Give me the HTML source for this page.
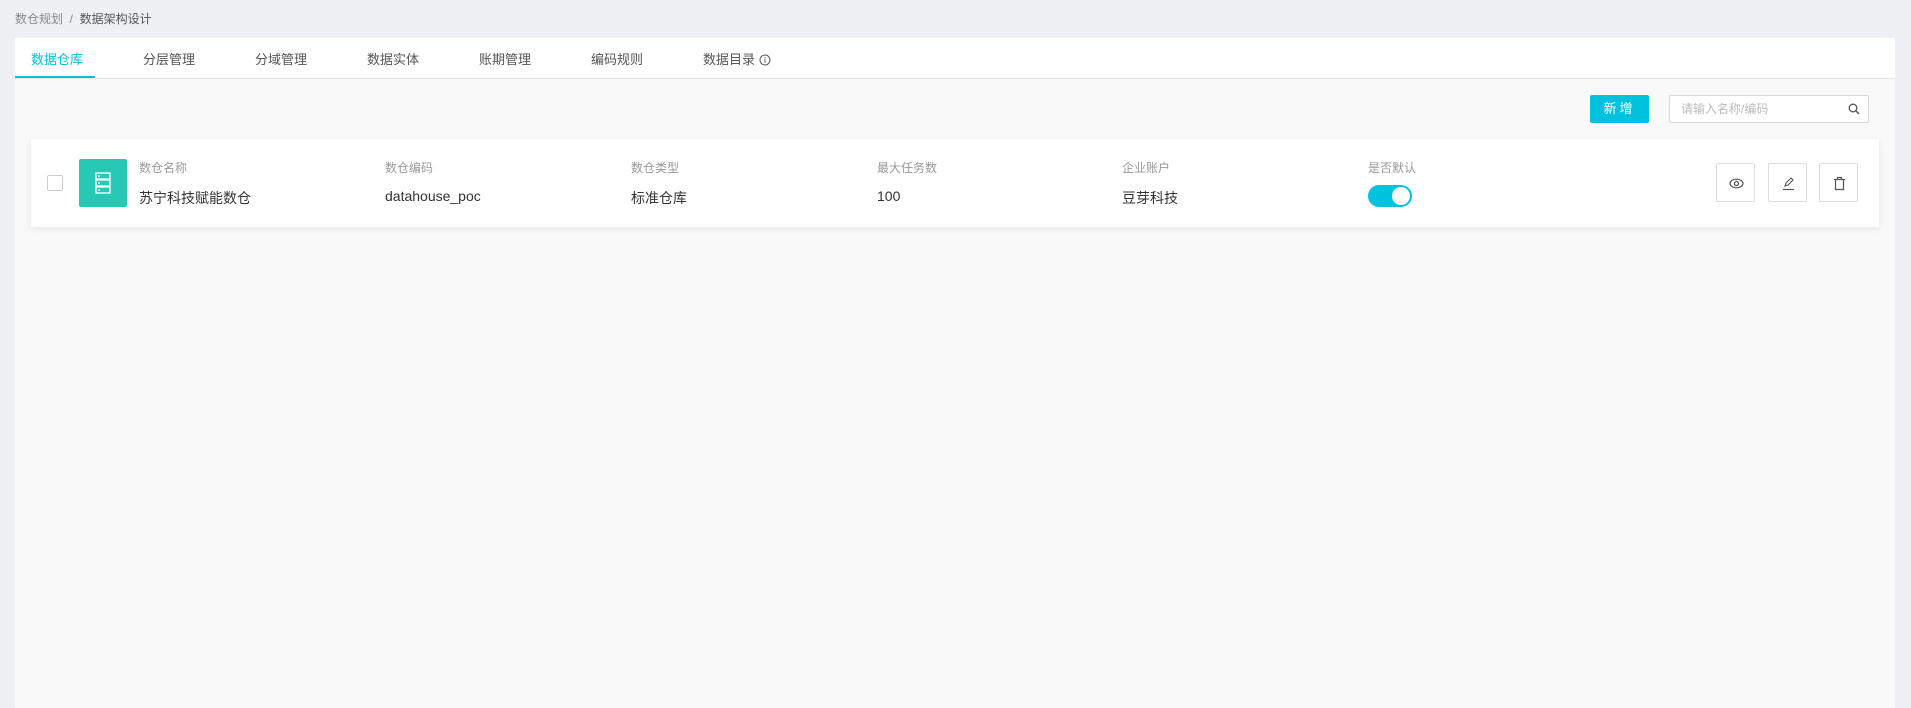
<!DOCTYPE html>
<html><head><meta charset="utf-8"><style>
*{box-sizing:border-box;margin:0;padding:0}
body{width:1911px;height:708px;background:#eff0f3;font-family:"Liberation Sans","Noto Sans CJK SC",sans-serif;position:relative;overflow:hidden;color:#333}
.a{position:absolute}
.bc{left:15px;top:10px;font-size:12px;color:#888}
.bc b{font-weight:normal;color:#555}
.panel{left:15px;top:38px;width:1880px;height:670px;background:#f9f9f9}
.tabs{left:0;top:0;width:1880px;height:41px;background:#fff;border-bottom:1px solid #e4e4e4}
.tab{top:11px;font-size:13px;color:#555}
.ul{left:0;top:38px;width:80px;height:2px;background:#00c1de}
.btn{left:1575px;top:57px;width:59px;height:28px;background:#00c1de;border-radius:2px;color:#fff;font-size:13px;text-align:center;line-height:28px;letter-spacing:3px}
.srch{left:1654px;top:57px;width:200px;height:28px;background:#fff;border:1px solid #d9d9d9;border-radius:2px;font-size:12px;color:#bbb;line-height:26px;padding-left:11px}
.card{left:16px;top:101px;width:1848px;height:88px;background:#fff;box-shadow:0 2px 6px rgba(0,0,0,.08)}
.lbl{top:20px;font-size:12px;color:#999}
.val{top:49px;font-size:14px;color:#333}
.ib{top:24px;width:39px;height:39px;border:1px solid #ddd;border-radius:2px;background:#fff}
.ib svg{position:absolute;left:12px;top:12px}
</style></head><body>
<div class="a bc">数仓规划 &nbsp;/&nbsp; <b>数据架构设计</b></div>
<div class="a panel">
 <div class="a tabs">
  <div class="a tab" style="left:16px;color:#00c1de">数据仓库</div>
  <div class="a tab" style="left:128px">分层管理</div>
  <div class="a tab" style="left:240px">分域管理</div>
  <div class="a tab" style="left:352px">数据实体</div>
  <div class="a tab" style="left:464px">账期管理</div>
  <div class="a tab" style="left:576px">编码规则</div>
  <div class="a tab" style="left:688px">数据目录 <svg width="12" height="12" style="vertical-align:-2px"><circle cx="6" cy="6" r="5" fill="none" stroke="#555"/><path d="M6 5v4M6 3v1" stroke="#555"/></svg></div>
  <div class="a ul"></div>
 </div>
 <div class="a btn">新增</div>
 <div class="a srch">请输入名称/编码<svg class="a" style="right:8px;top:7px" width="12" height="12"><circle cx="5" cy="5" r="3.8" fill="none" stroke="#555" stroke-width="1.3"/><path d="M8 8l3 3" stroke="#555" stroke-width="1.5"/></svg></div>
 <div class="a card">
  <div class="a" style="left:16px;top:36px;width:16px;height:16px;border:1px solid #ccc;border-radius:2px"></div>
  <div class="a" style="left:48px;top:20px;width:48px;height:48px;background:#26c9b4;border-radius:2px">
   <svg class="a" style="left:16px;top:13px" width="16" height="22"><rect x="1" y="1" width="14" height="6" fill="none" stroke="#fff" stroke-width="1.3"/><rect x="1" y="8" width="14" height="6" fill="none" stroke="#fff" stroke-width="1.3"/><rect x="1" y="15" width="14" height="6" fill="none" stroke="#fff" stroke-width="1.3"/><circle cx="4" cy="4" r=".9" fill="#fff"/><circle cx="4" cy="11" r=".9" fill="#fff"/><circle cx="4" cy="18" r=".9" fill="#fff"/></svg>
  </div>
  <div class="a lbl" style="left:108px">数仓名称</div><div class="a val" style="left:108px">苏宁科技赋能数仓</div>
  <div class="a lbl" style="left:354px">数仓编码</div><div class="a val" style="left:354px">datahouse_poc</div>
  <div class="a lbl" style="left:600px">数仓类型</div><div class="a val" style="left:600px">标准仓库</div>
  <div class="a lbl" style="left:846px">最大任务数</div><div class="a val" style="left:846px">100</div>
  <div class="a lbl" style="left:1091px">企业账户</div><div class="a val" style="left:1091px">豆芽科技</div>
  <div class="a lbl" style="left:1337px">是否默认</div>
  <div class="a" style="left:1337px;top:46px;width:44px;height:22px;border-radius:11px;background:#00c1de"><div class="a" style="left:24px;top:2px;width:18px;height:18px;border-radius:50%;background:#fff"></div></div>
  <div class="a ib" style="left:1685px"><svg width="15" height="15"><ellipse cx="7.5" cy="7.5" rx="6.5" ry="4.3" fill="none" stroke="#555" stroke-width="1.2"/><circle cx="7.5" cy="7.5" r="2" fill="none" stroke="#555" stroke-width="1.2"/></svg></div>
  <div class="a ib" style="left:1737px"><svg width="15" height="15"><path d="M4 10l1-3 5-5 2 2-5 5z" fill="none" stroke="#555" stroke-width="1.1"/><path d="M2 13.5h11" stroke="#555" stroke-width="1.2"/></svg></div>
  <div class="a ib" style="left:1788px"><svg width="15" height="15"><path d="M2 3.5h11M5.5 3.5V1.5h4v2M3.5 4v9.5h8V4" fill="none" stroke="#555" stroke-width="1.2"/></svg></div>
 </div>
</div>
</body></html>
